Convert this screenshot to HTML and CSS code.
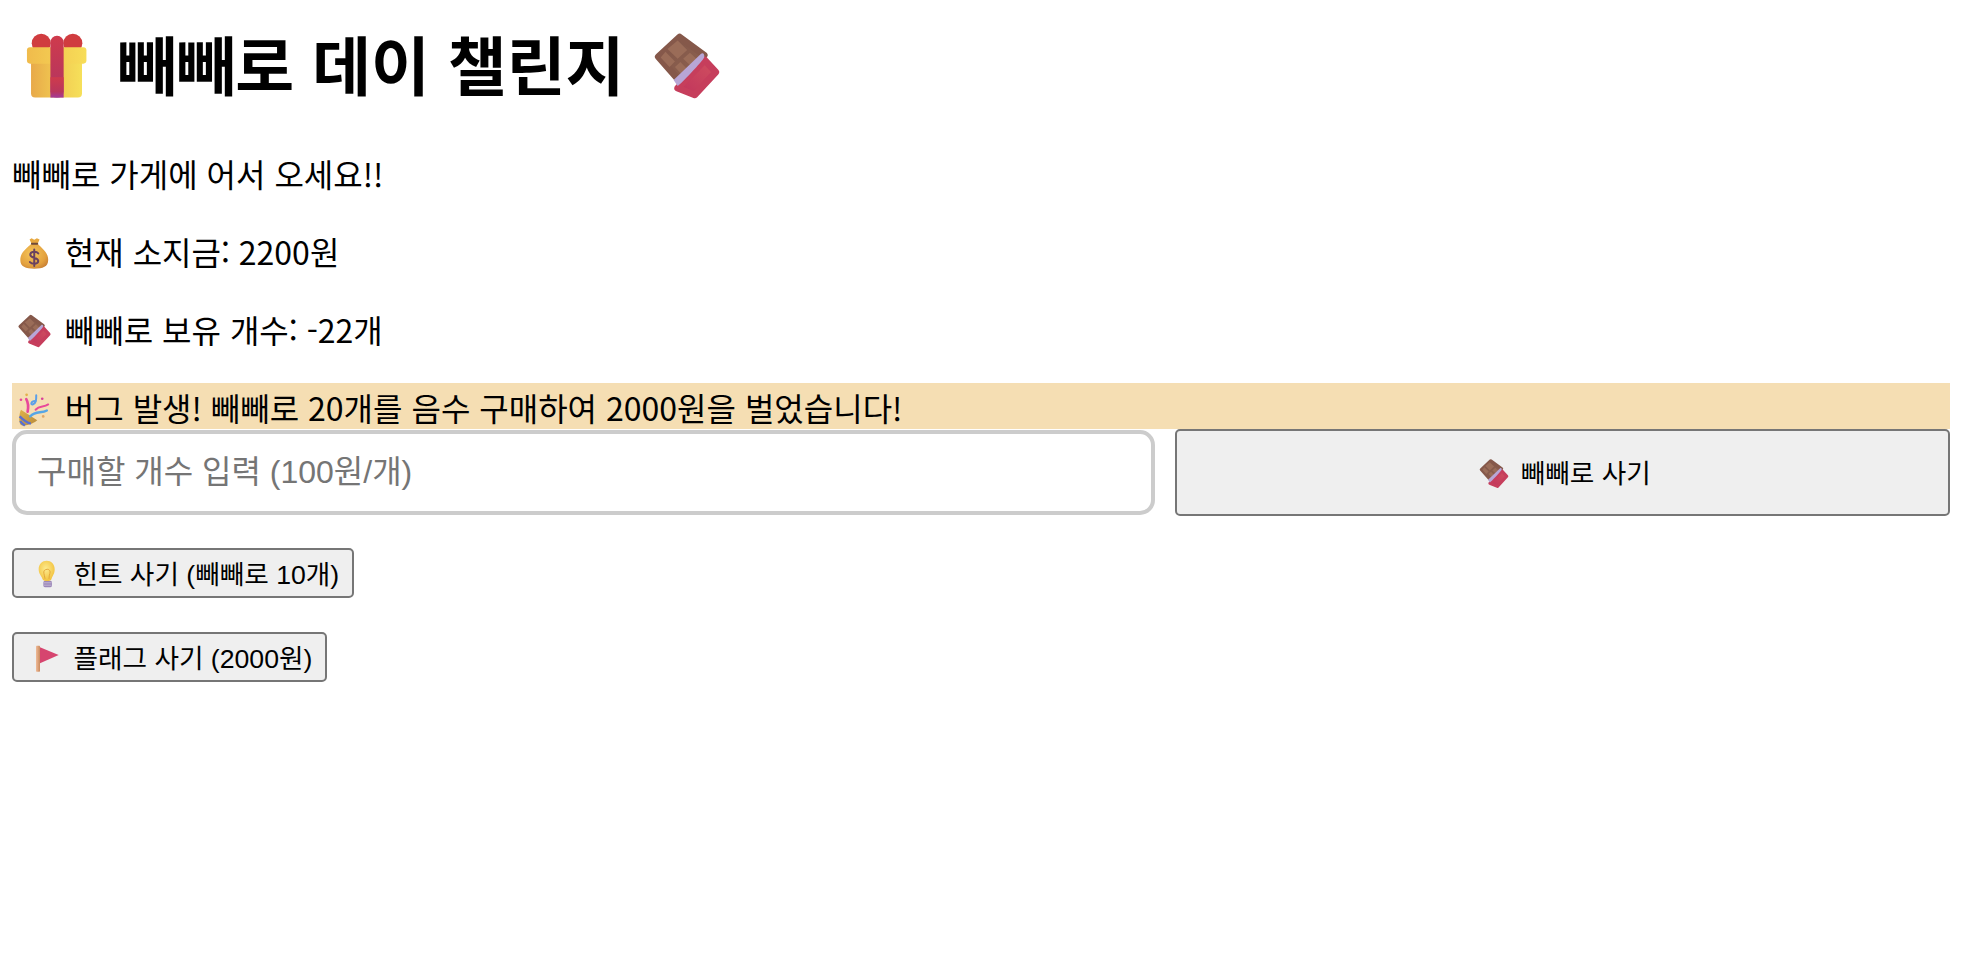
FILE: index.html
```html
<!DOCTYPE html>
<html lang="ko">
<head>
<meta charset="utf-8">
<title>빼빼로 데이 챌린지</title>
<link rel="stylesheet" href="styles.css">
</head>
<body>
<svg class="defs" aria-hidden="true">
  <defs>
    <linearGradient id="gBox" x1="0" x2="1" y1="0" y2="0"><stop offset="0" stop-color="#e8a94a"/><stop offset=".45" stop-color="#f0c650"/><stop offset="1" stop-color="#f6e05a"/></linearGradient>
    <linearGradient id="gLid" x1="0" x2="1" y1="0" y2="0"><stop offset="0" stop-color="#f0bb4c"/><stop offset="1" stop-color="#f7dd58"/></linearGradient>
    <linearGradient id="gRib" x1="0" x2="0" y1="0" y2="1"><stop offset="0" stop-color="#cf3b4c"/><stop offset=".7" stop-color="#b9365c"/><stop offset="1" stop-color="#a23a9a"/></linearGradient>
    <radialGradient id="gBag" cx=".42" cy=".4" r=".7"><stop offset="0" stop-color="#f6c65a"/><stop offset=".7" stop-color="#e3a13e"/><stop offset="1" stop-color="#c77e34"/></radialGradient>
    <radialGradient id="gBulb" cx=".45" cy=".4" r=".6"><stop offset="0" stop-color="#fdeb8f"/><stop offset="1" stop-color="#f2c23e"/></radialGradient>
    <linearGradient id="gPole" x1="0" x2="1" y1="0" y2="0"><stop offset="0" stop-color="#f0bb98"/><stop offset="1" stop-color="#c98a5e"/></linearGradient>
    <linearGradient id="gCone" x1="0" x2="1" y1="0" y2="1"><stop offset="0" stop-color="#e0b34a"/><stop offset="1" stop-color="#b98a3a"/></linearGradient>
    <linearGradient id="gRed" x1="1" x2="0" y1="0" y2="1"><stop offset="0" stop-color="#d0505f"/><stop offset="1" stop-color="#c0335c"/></linearGradient>
    <linearGradient id="gBrown" x1="0" x2="1" y1="0" y2="1"><stop offset="0" stop-color="#7f5548"/><stop offset="1" stop-color="#8f6250"/></linearGradient>

    <symbol id="i-gift" viewBox="6 37.5 258 258">
      <circle cx="92" cy="100" r="28" fill="#d03c3f"/>
      <circle cx="185" cy="100" r="28" fill="#d03c3f"/>
      <rect x="62" y="150" width="150" height="110" rx="12" fill="url(#gBox)"/>
      <rect x="50" y="112" width="175" height="48" rx="9" fill="url(#gLid)"/>
      <rect x="119" y="78" width="39" height="182" rx="19" fill="url(#gRib)"/>
      <rect x="119" y="200" width="39" height="60" fill="url(#gRib)"/>
    </symbol>

    <symbol id="i-choc" viewBox="7 37.5 258 258">
      <path d="M118 82 L55 140 L115 208 L190 135 Z" fill="url(#gBrown)" stroke="#85584a" stroke-width="20" stroke-linejoin="round"/>
      <path d="M112 92 L140 120 L112 146 L82 117 Z M148 128 L167 146 L148 164 L128 146 Z M76 125 L104 154 L88 170 L62 142 Z M120 155 L138 174 L122 190 L104 170 Z" fill="#9a6c58"/>
      <path d="M112 232 L192 150 L224 185 L162 252 Z" fill="url(#gRed)" stroke="#c63e5c" stroke-width="20" stroke-linejoin="round"/>
      <path d="M100 208 L180 132 C186 126 192 132 190 142 C186 152 120 222 112 226 Z" fill="#b8a6d6"/>
    </symbol>

    <symbol id="i-bag" viewBox="21 16.5 132 132">
      <path d="M74 42 L80 38 L88 43 L96 38 L104 42 L98 56 L80 56 Z" fill="#e7a83f"/>
      <path d="M80 54 C66 68 46 80 46 104 C46 124 62 130 88 130 C114 130 130 124 130 104 C130 80 110 68 98 54 Z" fill="url(#gBag)"/>
      <rect x="78" y="52" width="22" height="6" rx="3" fill="#6f4a3a"/>
      <path d="M100 84 C94 76 76 78 76 88 C76 100 100 94 100 107 C100 117 82 118 75 110 M88 72 V122" fill="none" stroke="#6b4260" stroke-width="6" stroke-linecap="round"/>
    </symbol>

    <symbol id="i-party" viewBox="21 19.5 132 132">
      <path d="M48 88 L97 120 C90 128 60 140 48 134 C40 128 42 100 48 88 Z" fill="url(#gCone)"/>
      <path d="M44 108 C58 122 68 128 78 130 M46 122 C50 130 56 132 60 136" fill="none" stroke="#5a6fd0" stroke-width="7"/>
      <path d="M64 56 C72 70 70 84 68 94" fill="none" stroke="#e8489a" stroke-width="8" stroke-linecap="round"/>
      <path d="M94 44 C94 60 94 68 84 72 C76 74 78 62 90 62" fill="none" stroke="#5c9fe8" stroke-width="6" stroke-linecap="round"/>
      <path d="M92 88 C104 74 116 82 130 72" fill="none" stroke="#e8489a" stroke-width="6" stroke-linecap="round"/>
      <path d="M76 108 C92 90 110 100 126 90" fill="none" stroke="#55a6e6" stroke-width="7" stroke-linecap="round"/>
      <circle cx="65" cy="43" r="4" fill="#e4b24c"/>
      <circle cx="48" cy="58" r="4" fill="#e8489a"/>
      <circle cx="112" cy="55" r="4" fill="#d9409a"/>
      <circle cx="115" cy="108" r="4" fill="#e0a868"/>
    </symbol>

    <symbol id="i-bulb" viewBox="18 18.5 117 117">
      <rect x="67" y="96" width="26" height="19" rx="5" fill="#9b87b8"/>
      <path d="M68 102 H92 M68 109 H92" stroke="#d8cfe4" stroke-width="2"/>
      <path d="M65 92 C62 80 53 76 53 61 C53 46 64 36 77 36 C90 36 101 46 101 61 C101 76 94 80 91 92 C86 98 70 98 65 92 Z" fill="url(#gBulb)"/>
      <path d="M72 90 C70 76 66 70 70 65 C75 60 83 60 86 65 C90 70 84 76 84 90" fill="none" stroke="#e4a83a" stroke-width="3"/>
    </symbol>

    <symbol id="i-flag" viewBox="18 12 117 117">
      <rect x="45" y="32" width="12" height="78" rx="2" fill="url(#gPole)"/>
      <path d="M57 37 L113 60 L57 85 Z" fill="#d6456f"/>
    </symbol>
  </defs>
</svg>

<h1 class="title"><svg class="emoji"><use href="#i-gift"/></svg> 빼빼로 데이 챌린지 <svg class="emoji"><use href="#i-choc"/></svg></h1>
<p class="line">빼빼로 가게에 어서 오세요!!</p>
<p class="line"><svg class="emoji"><use href="#i-bag"/></svg> 현재 소지금: 2200원</p>
<p class="line"><svg class="emoji"><use href="#i-choc"/></svg> 빼빼로 보유 개수: -22개</p>
<p class="line message"><svg class="emoji"><use href="#i-party"/></svg> 버그 발생! 빼빼로 20개를 음수 구매하여 2000원을 벌었습니다!</p>
<div class="buy-row">
  <input class="qty" type="number" placeholder="구매할 개수 입력 (100원/개)">
  <button class="btn btn-buy"><svg class="emoji"><use href="#i-choc"/></svg> 빼빼로 사기</button>
</div>
<div class="shop">
  <button class="btn"><svg class="emoji"><use href="#i-bulb"/></svg> 힌트 사기 (빼빼로 10개)</button>
  <button class="btn"><svg class="emoji"><use href="#i-flag"/></svg> 플래그 사기 (2000원)</button>
</div>
</body>
</html>
```
FILE: styles.css
```css
html, body { background: #fff; }
body {
  margin: 0 12px;
  font-family: "Noto Sans CJK KR", sans-serif;
  font-size: 32px;
  color: #000;
}
.defs { display: block; width: 0; height: 0; }
.emoji {
  width: 1.37em;
  height: 1.37em;
  margin-block: -0.2em;
  vertical-align: -0.1em;
}
.title {
  margin: 16px 0 40px;
  font-size: 64px;
  font-weight: 700;
  line-height: 93px;
}
.line {
  margin: 0 0 32px;
  padding-top: 2px;
  line-height: 44px;
}
.message {
  margin: 0;
  background: #f5deb3;
}
.buy-row {
  display: flex;
  align-items: center;
  gap: 20px;
}
.qty {
  flex: 1;
  min-width: 0;
  box-sizing: border-box;
  height: 85px;
  padding: 0 21px;
  border: 4px solid #ccc;
  border-radius: 15px;
  font-family: "Liberation Sans", "Noto Sans CJK KR", sans-serif;
  font-size: 32px;
  outline: none;
}
.qty::placeholder { color: #757575; }
.btn {
  box-sizing: border-box;
  height: 50px;
  padding: 0 13px;
  background: #efefef;
  border: 2px solid #767676;
  border-radius: 5px;
  font-family: "Liberation Sans", "Noto Sans CJK KR", sans-serif;
  font-size: 26.67px;
  color: #000;
}
.btn .emoji { width: 39px; height: 39px; margin-block: 0; vertical-align: -10px; }
.btn-buy { flex: 0 0 775px; height: 87px; }
.shop {
  display: flex;
  flex-direction: column;
  align-items: flex-start;
  gap: 34px;
  margin-top: 32px;
}
```
